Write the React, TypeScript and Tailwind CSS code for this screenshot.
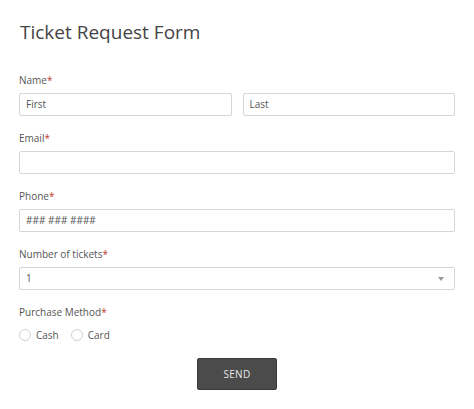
import React from 'react';

const Label: React.FC<{ text: string }> = ({ text }) => (
  <div className="h-[15px] text-[10px] leading-[15px] text-[#555] mb-[5px]">
    {text}
    <span className="text-[#c0392b]">*</span>
  </div>
);

const Field: React.FC<{ value?: string; className?: string }> = ({ value, className }) => (
  <div
    className={`h-[23px] border border-[#d6d6d6] rounded-[2px] bg-white px-[6px] flex items-center text-[10px] text-[#555] ${className ?? ''}`}
  >
    {value}
  </div>
);

const Radio: React.FC<{ label: string }> = ({ label }) => (
  <div className="flex items-center">
    <span className="w-[12px] h-[12px] rounded-full border border-[#d0d0d0] bg-white" />
    <span className="ml-[5px] text-[10px] text-[#555]">{label}</span>
  </div>
);

export default function App() {
  return (
    <div
      className="w-[474px] h-[409px] bg-white pl-[19px] pr-[19px] pt-[18px]"
      style={{ fontFamily: '"Open Sans", "Noto Sans", sans-serif' }}
    >
      <h1 className="text-[19px] leading-[28px] text-[#444] ml-px">Ticket Request Form</h1>

      <div className="mt-[27px]">
        <Label text="Name" />
        <div className="grid grid-cols-2 gap-[11px]">
          <Field value="First" />
          <Field value="Last" />
        </div>
      </div>

      <div className="mt-[15px]">
        <Label text="Email" />
        <Field />
      </div>

      <div className="mt-[15px]">
        <Label text="Phone" />
        <Field value="### ### ####" />
      </div>

      <div className="mt-[15px]">
        <Label text="Number of tickets" />
        <div className="h-[23px] border border-[#d6d6d6] rounded-[2px] bg-white pl-[6px] pr-[10px] flex items-center justify-between text-[10px] text-[#555]">
          <span>1</span>
          <svg width="6" height="4" viewBox="0 0 6 4">
            <path d="M0 0 L6 0 L3 4 Z" fill="#999" />
          </svg>
        </div>
      </div>

      <div className="mt-[15px]">
        <Label text="Purchase Method" />
        <div className="flex items-center gap-[12px] h-[20px]">
          <Radio label="Cash" />
          <Radio label="Card" />
        </div>
      </div>

      <div className="flex justify-center mt-[13px]">
        <button className="w-[80px] h-[32px] bg-[#4b4b4b] border border-[#3a3a3a] rounded-[2px] text-[10px] text-[#e8e8e8] tracking-wide">
          SEND
        </button>
      </div>
    </div>
  );
}
